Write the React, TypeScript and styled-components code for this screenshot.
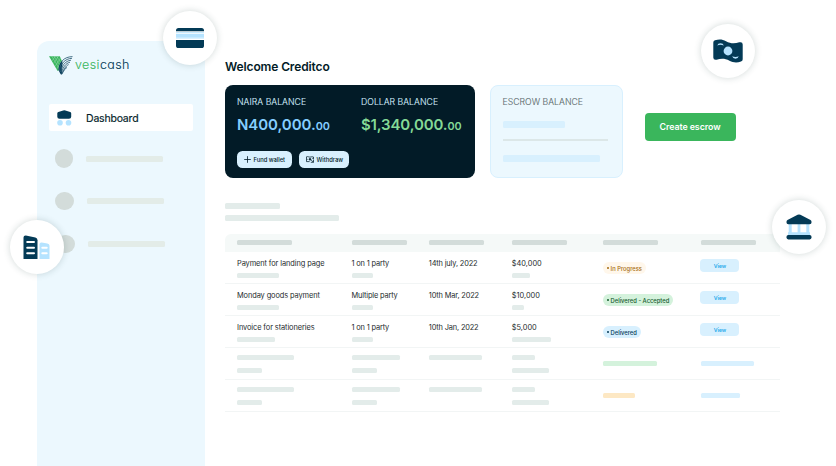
import React from "react";
import styled, { createGlobalStyle } from "styled-components";

const GlobalStyle = createGlobalStyle`
  *, *::before, *::after { box-sizing: border-box; }
  body { margin: 0; background: #fff; font-family: Inter, "Liberation Sans", sans-serif; }
  svg { display: block; }
`;

const Page = styled.div`
  position: relative;
  width: 836px;
  height: 466px;
  overflow: hidden;
  display: flex;
  padding-left: 37px;
  gap: 20px;
`;

const Sidebar = styled.aside`
  width: 168px;
  height: 425px;
  margin-top: 41px;
  padding: 15px 12px 0;
  border-radius: 12px 0 0 0;
  background: #ecf8fe;
`;

const Brand = styled.div`
  display: flex;
  align-items: center;
  height: 19px;
  gap: 2px;
`;

const BrandName = styled.span`
  margin-top: -1px;
  font-size: 12.5px;
  font-weight: 300;
  line-height: 16px;
  letter-spacing: 0.4px;
  font-feature-settings: "cv11";
  color: #033a56;
  -webkit-text-stroke: 0.1px;
`;

const BrandAccent = styled.span`
  color: #3ab65c;
`;

const ActiveItem = styled.div`
  display: flex;
  align-items: center;
  height: 27px;
  margin-top: 29px;
  padding: 1px 0 0 8px;
  gap: 14px;
  border-radius: 2px;
  background: #fff;
  color: #021b27;
  font-size: 10.5px;
  font-weight: 400;
  letter-spacing: -0.2px;
  -webkit-text-stroke: 0.15px;
`;

const GhostList = styled.div`
  display: flex;
  flex-direction: column;
  gap: 24.6px;
  padding-top: 18.6px;
`;

const GhostItem = styled.div<{ $indent: number }>`
  display: flex;
  align-items: center;
  gap: 13px;
  height: 18px;
  padding-left: ${(p) => p.$indent}px;
`;

const Dot = styled.span`
  width: 18.5px;
  height: 18.5px;
  border-radius: 50%;
  background: #d3dcda;
`;

const Bar = styled.span<{ $w: number; $h?: number; $c?: string }>`
  display: block;
  flex: none;
  width: ${(p) => p.$w}px;
  height: ${(p) => p.$h ?? 5}px;
  border-radius: 1.5px;
  background: ${(p) => p.$c ?? "#e3ecea"};
`;

const Main = styled.main`
  width: 555px;
  padding-top: 57px;
`;

const Title = styled.h1`
  margin: 0;
  height: 28px;
  font-size: 12px;
  line-height: 19px;
  font-weight: 600;
  letter-spacing: -0.12px;
  color: #021b27;
`;

const Summary = styled.section`
  display: flex;
  height: 93px;
`;

const BalanceCard = styled.div`
  width: 250px;
  padding: 11px 12px 0;
  border-radius: 8px;
  background: #021b27;
`;

const Balances = styled.div`
  display: grid;
  grid-template-columns: 124px 1fr;
`;

const Label = styled.div<{ $c: string }>`
  font-size: 8.7px;
  line-height: 12px;
  font-weight: 300;
  letter-spacing: 0.02px;
  white-space: nowrap;
  color: ${(p) => p.$c};
  -webkit-text-stroke: 0.1px;
`;

const Amount = styled.div<{ $c: string; $track: number }>`
  height: 22px;
  margin-top: 6px;
  font-size: 15px;
  line-height: 22px;
  font-weight: 600;
  letter-spacing: ${(p) => p.$track}px;
  white-space: nowrap;
  color: ${(p) => p.$c};
`;

const Cents = styled.span`
  font-size: 10.8px;
`;

const Actions = styled.div`
  display: flex;
  gap: 7px;
  margin-top: 15px;
`;

const Pill = styled.button<{ $w: number }>`
  display: flex;
  align-items: center;
  width: ${(p) => p.$w}px;
  height: 16.5px;
  padding: 0 0 0 6.5px;
  gap: 3px;
  border: 0;
  border-radius: 5.5px;
  background: #d8f0fe;
  color: #021b27;
  font: 500 5.8px Inter, sans-serif;
  letter-spacing: -0.02px;
  white-space: nowrap;
`;

const EscrowCard = styled.div`
  width: 132.5px;
  margin-left: 15px;
  padding: 10px 11.5px 0;
  border: 1px solid #d8f0fe;
  border-radius: 8px;
  background: #ecf8fe;
`;

const Rule = styled.div`
  width: 105.5px;
  height: 1.5px;
  margin: 11px 0 14px;
  background: #dce7e8;
`;

const CreateButton = styled.button`
  width: 91px;
  height: 27.5px;
  margin: 28px 0 0 22px;
  padding: 0;
  border: 0;
  border-radius: 4px;
  background: #3ab65c;
  color: #fff;
  font: 600 8.8px Inter, sans-serif;
  letter-spacing: -0.05px;
`;

const Heading = styled.div`
  display: flex;
  flex-direction: column;
  gap: 6px;
  padding: 25px 0 12.5px;
`;

const Row = styled.div`
  display: grid;
  grid-template-columns: 114.5px 77.3px 83px 91.5px 97.5px 1fr;
  height: 32px;
  padding-left: 12px;
  border-bottom: 1px solid #f2f5f5;
`;

const HeaderRow = styled(Row)`
  height: 18px;
  align-items: center;
  border: 0;
  border-radius: 6px 0 0 0;
  background: #f5f9f8;
`;

const Cell = styled.div`
  padding-top: 6px;
`;

const CellText = styled.div<{ $track: number }>`
  height: 15.3px;
  font-size: 7.4px;
  line-height: 12px;
  letter-spacing: ${(p) => p.$track}px;
  white-space: nowrap;
  color: #252b2d;
`;

const GhostCell = styled.div`
  display: flex;
  flex-direction: column;
  gap: 7.5px;
  padding-top: 7.4px;
`;

const TintCell = styled.div`
  padding-top: 13.6px;
`;

const Status = styled.span<{ $bg: string; $c: string; $w: number }>`
  display: flex;
  align-items: center;
  gap: 1.6px;
  width: ${(p) => p.$w}px;
  height: 12px;
  margin-top: 10.7px;
  padding-left: 3.7px;
  border-radius: 6px;
  background: ${(p) => p.$bg};
  color: ${(p) => p.$c};
  font-size: 5.8px;
  font-weight: 500;
  white-space: nowrap;

  &::before {
    content: "";
    width: 2px;
    height: 2px;
    border-radius: 50%;
    background: currentColor;
  }
`;

const ViewButton = styled.button`
  display: block;
  width: 39px;
  height: 12.7px;
  margin: 7.6px 0 0 -0.4px;
  padding: 0;
  border: 0;
  border-radius: 4px;
  background: #d8f0fe;
  color: #27a9eb;
  font: 600 5.2px Inter, sans-serif;
`;

const Badge = styled.div<{ $x: number; $y: number }>`
  position: absolute;
  left: ${(p) => p.$x}px;
  top: ${(p) => p.$y}px;
  display: flex;
  align-items: center;
  justify-content: center;
  width: 54px;
  height: 54px;
  border-radius: 50%;
  background: #fff;
  box-shadow: 0 0 7px rgba(30, 65, 60, 0.2);
`;

const NAVY = "#033a56";
const SKY = "#b5e3ff";

const BrandMark = () => (
  <svg width="24" height="19" viewBox="0 0 24 19">
    <path d="M0 .3H10.8L13 5.2C10.5 7.6 9.5 10 9.7 14L8.6 15Z" fill="#3ab65c" />
    <g stroke="#ecf8fe" strokeWidth=".25" fill="none">
      <path d="M2.5 0 10 12M5 0l6 9.5M7.5 0 12 7M3 5 6.5 0M4.5 7.6 9.5 0M6 10.5 11.5 2M7.5 13l5-7.5" />
    </g>
    <path d="M9.5 14Q9.6 8 13.3 5Q13.7 10 12.2 18.7Z" fill={NAVY} />
    <g stroke={NAVY} fill="none" strokeWidth=".7">
      <path d="M10.2 15C9.8 6 15 .8 23.5.6" />
      <path d="M11 16.5C10.8 8 16 2.6 23 2.3" />
      <path d="M11.7 17.5C12 10 16.5 4.8 22 4.2" />
      <path d="M12.2 18.2C13 12 17 7 21 6.2" />
      <path d="M12.6 18.5C14 14 17 9.5 19.6 8.6" />
      <path d="M12.8 18C15 15 16 12 18 11.5" />
    </g>
    <path d="M10.4 14.8Q10.5 9 14 6M11.6 16Q12 10 15.6 7" stroke="#8fb4c3" strokeWidth=".3" fill="none" />
  </svg>
);

const DashboardIcon = () => (
  <svg width="15" height="16" viewBox="0 0 15 16">
    <path d="M.3 3.2Q.3 2.2 1.3 1.9L6.2.5Q7.3.1 8.4.5L13.2 1.9Q14.2 2.2 14.2 3.2V6.7Q14.2 8.8 12 8.8H2.4Q.3 8.8.3 6.7Z" fill={NAVY} />
    <circle cx="3" cy="12.8" r="2.8" fill={SKY} />
    <circle cx="11.5" cy="12.8" r="2.8" fill={SKY} />
  </svg>
);

const PlusIcon = () => (
  <svg width="7" height="7" viewBox="0 0 7 7" stroke="#021b27" strokeWidth=".8">
    <path d="M3.5.2V6.8M.2 3.5H6.8" />
  </svg>
);

const CashOutIcon = () => (
  <svg width="8" height="7" viewBox="0 0 8 7" fill="none" stroke="#021b27" strokeWidth=".75">
    <path d="M3.6 5.6H.5V.8C2 .2 2.8 1.2 4 1.1S6.3.5 7.5 1V3.1" />
    <circle cx="4" cy="3.3" r=".9" fill="#021b27" />
    <path d="M7.5 3.6V6.3H4.8M7.3 6.1 5.1 4M.8 3.4H1.6M6.3 2.4H7.1" />
  </svg>
);

const CardIcon = () => (
  <svg width="28" height="20" viewBox="0 0 28 20">
    <path d="M0 3.2V2.5Q0 0 2.5 0H25.5Q28 0 28 2.5V3.2Z" fill={NAVY} />
    <path d="M0 4.3H28V5.1H0ZM0 5.7H28V9.8H0ZM0 10.4H28V11.1H0Z" fill={SKY} />
    <path d="M0 12H28V17.4Q28 20 25.5 20H2.5Q0 20 0 17.4Z" fill={NAVY} />
  </svg>
);

const BanknoteIcon = () => (
  <svg width="30" height="24" viewBox="0 0 30 24">
    <path d="M.3 3.6Q.3 1.8 2 1.3C6 .1 9.5.2 13 2.3C18 5 22 4.6 26.3 3.3Q29.7 2.5 29.7 5.5V20.2Q29.7 22 28 22.6C24 24 20 23.7 16.5 21.8C12 19.3 8 19.5 3.6 20.7Q.3 21.3.3 18.5Z" fill={NAVY} />
    <circle cx="15" cy="12" r="4.4" fill={SKY} />
    <path d="M4.3 6.4Q4.8 4.2 7.5 4.2T10.8 6.6Q7.5 5.2 4.3 6.4ZM19.2 17.3Q22.5 18.6 25.7 17.3Q25.2 19.7 22.5 19.7T19.2 17.3Z" fill={SKY} />
  </svg>
);

const BankIcon = () => (
  <svg width="26" height="26" viewBox="0 0 26 26">
    <path d="M2.7 9H5.7V18.3H11.6V9H14.4V18.3H20.3V9H23.3V18.3H24V21.5H2V18.3H2.7Z" fill={SKY} />
    <path d="M.5 7.8Q.5 6.6 1.5 6L11.6.8Q13 0 14.4.8L24.5 6Q25.5 6.6 25.5 7.8V8.4Q25.5 10.2 23.7 10.2H2.3Q.5 10.2.5 8.4Z" fill={NAVY} />
    <rect x=".5" y="21" width="25" height="4.4" rx="1.8" fill={NAVY} />
  </svg>
);

const BuildingsIcon = () => (
  <svg width="27" height="24" viewBox="0 0 27 24">
    <path d="M.5 24V2.6Q.5.5 2.8.6L12.4 2.5Q14.5 3 14.5 5.2V24Z" fill={NAVY} />
    <path d="M16.5 24V9.5Q16.5 7.4 18.7 7.6L24.3 8.4Q26.5 8.8 26.5 10.8V24Z" fill={SKY} />
    <path d="M4.2 7H11M4.2 12.7H11M4.2 18.2H11M19.3 12.7H23.7M19.3 18.2H23.7" stroke="#fff" strokeWidth="2" strokeLinecap="round" />
  </svg>
);

const records = [
  { name: "Payment for landing page", nameBar: 41.5, party: "1 on 1 party", date: "14th july, 2022", sum: "$40,000", sumBar: 18, status: "In Progress", bg: "#fff7eb", c: "#a66b10", w: 43 },
  { name: "Monday goods payment", nameBar: 41.5, party: "Multiple party", date: "10th Mar, 2022", sum: "$10,000", sumBar: 12.5, status: "Delivered - Accepted", bg: "#d4f2dc", c: "#145a2c", w: 69.5 },
  { name: "Invoice for stationeries", nameBar: 37.5, party: "1 on 1 party", date: "10th Jan, 2022", sum: "$5,000", sumBar: 39.5, status: "Delivered", bg: "#d8f0fe", c: "#033a56", w: 37.5 },
];

const pending = [
  { tint: "#d4f2dc", width: 53.5, action: 53.5 },
  { tint: "#fde8c4", width: 32, action: 39 },
];

export default function App() {
  return (
    <Page>
      <GlobalStyle />
      <Sidebar>
        <Brand>
          <BrandMark />
          <BrandName><BrandAccent>vesi</BrandAccent>cash</BrandName>
        </Brand>
        <ActiveItem><DashboardIcon />Dashboard</ActiveItem>
        <GhostList>
          {[5.6, 6.4, 7.2].map((indent) => (
            <GhostItem key={indent} $indent={indent}>
              <Dot />
              <Bar $w={77} $h={6} $c="#e3ece8" />
            </GhostItem>
          ))}
        </GhostList>
      </Sidebar>
      <Main>
        <Title>Welcome Creditco</Title>
        <Summary>
          <BalanceCard>
            <Balances>
              <div>
                <Label $c="#d8f0fe">NAIRA BALANCE</Label>
                <Amount $c="#85ceff" $track={-0.05}>N400,000.<Cents>00</Cents></Amount>
              </div>
              <div>
                <Label $c="#d8f0fe">DOLLAR BALANCE</Label>
                <Amount $c="#84d996" $track={-0.14}>$1,340,000.<Cents>00</Cents></Amount>
              </div>
            </Balances>
            <Actions>
              <Pill $w={55}><PlusIcon />Fund wallet</Pill>
              <Pill $w={49.5}><CashOutIcon />Withdraw</Pill>
            </Actions>
          </BalanceCard>
          <EscrowCard>
            <Label $c="#5d6b6c">ESCROW BALANCE</Label>
            <Bar $w={62} $h={7} $c="#d8f0fe" style={{ marginTop: 13.4 }} />
            <Rule />
            <Bar $w={97.5} $h={7} $c="#d8f0fe" />
          </EscrowCard>
          <CreateButton>Create escrow</CreateButton>
        </Summary>
        <Heading>
          <Bar $w={55} $h={6} />
          <Bar $w={114} $h={6.3} />
        </Heading>
        <HeaderRow>
          {[1, 2, 3, 4, 5, 6].map((n) => <Bar key={n} $w={55} $c="#d3dcda" />)}
        </HeaderRow>
        {records.map((r) => (
          <Row key={r.name}>
            <Cell><CellText $track={-0.09}>{r.name}</CellText><Bar $w={r.nameBar} /></Cell>
            <Cell><CellText $track={-0.15}>{r.party}</CellText><Bar $w={21.5} /></Cell>
            <Cell><CellText $track={-0.15}>{r.date}</CellText></Cell>
            <Cell><CellText $track={0}>{r.sum}</CellText><Bar $w={r.sumBar} /></Cell>
            <div><Status $bg={r.bg} $c={r.c} $w={r.w}>{r.status}</Status></div>
            <div><ViewButton>View</ViewButton></div>
          </Row>
        ))}
        {pending.map((p) => (
          <Row key={p.tint}>
            <GhostCell><Bar $w={57} /><Bar $w={25} /></GhostCell>
            <GhostCell><Bar $w={48.5} /><Bar $w={25} /></GhostCell>
            <GhostCell><Bar $w={53.5} /></GhostCell>
            <GhostCell><Bar $w={23} /><Bar $w={37} /></GhostCell>
            <TintCell><Bar $w={p.width} $c={p.tint} /></TintCell>
            <TintCell><Bar $w={p.action} $c="#d8f0fe" /></TintCell>
          </Row>
        ))}
      </Main>
      <Badge $x={163} $y={10.5}><CardIcon /></Badge>
      <Badge $x={700.5} $y={23.5}><BanknoteIcon /></Badge>
      <Badge $x={772.4} $y={199.5}><BankIcon /></Badge>
      <Badge $x={9.6} $y={219.5}><BuildingsIcon /></Badge>
    </Page>
  );
}
